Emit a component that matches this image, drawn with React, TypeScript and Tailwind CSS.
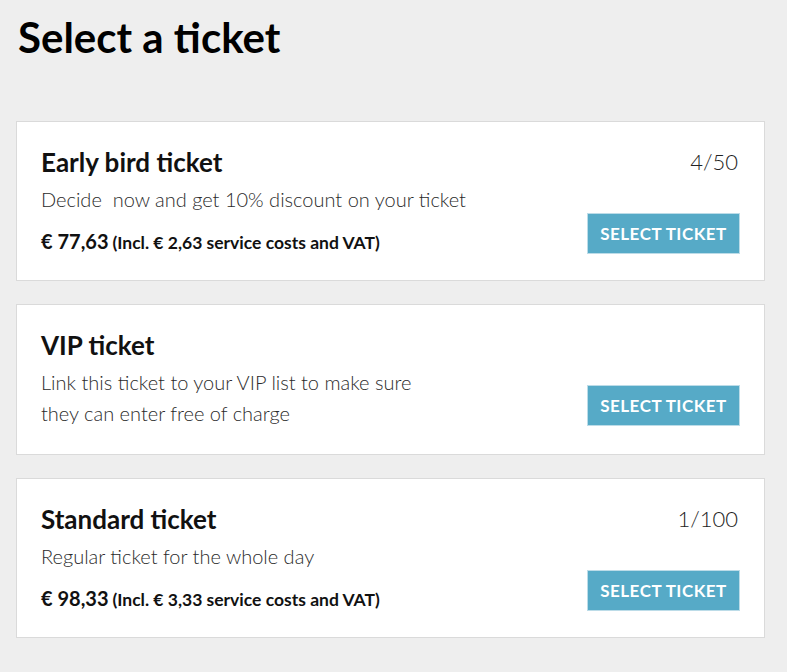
import React from 'react'

interface Ticket {
  name: string
  description: string[]
  price?: string
  fees?: string
  stock?: string
}

const tickets: Ticket[] = [
  {
    name: 'Early bird ticket',
    description: ['Decide\u00a0 now and get 10% discount on your ticket'],
    price: '€ 77,63',
    fees: '(Incl. € 2,63 service costs and VAT)',
    stock: '4/50',
  },
  {
    name: 'VIP ticket',
    description: ['Link this ticket to your VIP list to make sure', 'they can enter free of charge'],
  },
  {
    name: 'Standard ticket',
    description: ['Regular ticket for the whole day'],
    price: '€ 98,33',
    fees: '(Incl. € 3,33 service costs and VAT)',
    stock: '1/100',
  },
]

function TicketCard({ ticket }: { ticket: Ticket }) {
  // cards without a price line are one pixel taller in the design
  const bottom = ticket.price ? 'pb-[23px]' : 'pb-[25px]'
  return (
    <div className={`flex justify-between bg-white border border-[#dadada] px-[24px] pt-[24px] ${bottom}`}>
      <div className="flex flex-col">
        <h2 className="text-[26px] leading-[32px] font-bold text-[#111]">{ticket.name}</h2>
        <p className="mt-[6px] text-[20px] leading-[31px] font-light text-[#2b2b2b]">
          {ticket.description.map((line, i) => (
            <span key={i} className="block">
              {line}
            </span>
          ))}
        </p>
        {ticket.price && (
          <p className="mt-[12px] font-bold text-[#111] leading-[28px]">
            <span className="text-[20px]">{ticket.price}</span>{' '}
            <span className="text-[17.5px]">{ticket.fees}</span>
          </p>
        )}
      </div>
      <div className="flex flex-col items-end justify-between pb-[3px]">
        <span className="text-[22px] leading-[32px] font-light text-[#222] pr-[2px]">{ticket.stock}</span>
        <button
          type="button"
          className="w-[153px] h-[41px] bg-[#56aac7] border border-[#bcdce8] text-white text-[17px] font-bold tracking-[0.5px] uppercase"
        >
          Select ticket
        </button>
      </div>
    </div>
  )
}

export default function App() {
  return (
    <div
      className="min-h-screen bg-[#eeeeee] px-[16px] pt-[13px] pb-[34px]"
      style={{ fontFamily: 'Lato, "Noto Sans", sans-serif' }}
    >
      <h1 className="ml-[2px] text-[42px] leading-[48px] font-bold text-black">Select a ticket</h1>
      <div className="mt-[60px] w-[749px] flex flex-col gap-[23px]">
        {tickets.map((t) => (
          <TicketCard key={t.name} ticket={t} />
        ))}
      </div>
    </div>
  )
}
